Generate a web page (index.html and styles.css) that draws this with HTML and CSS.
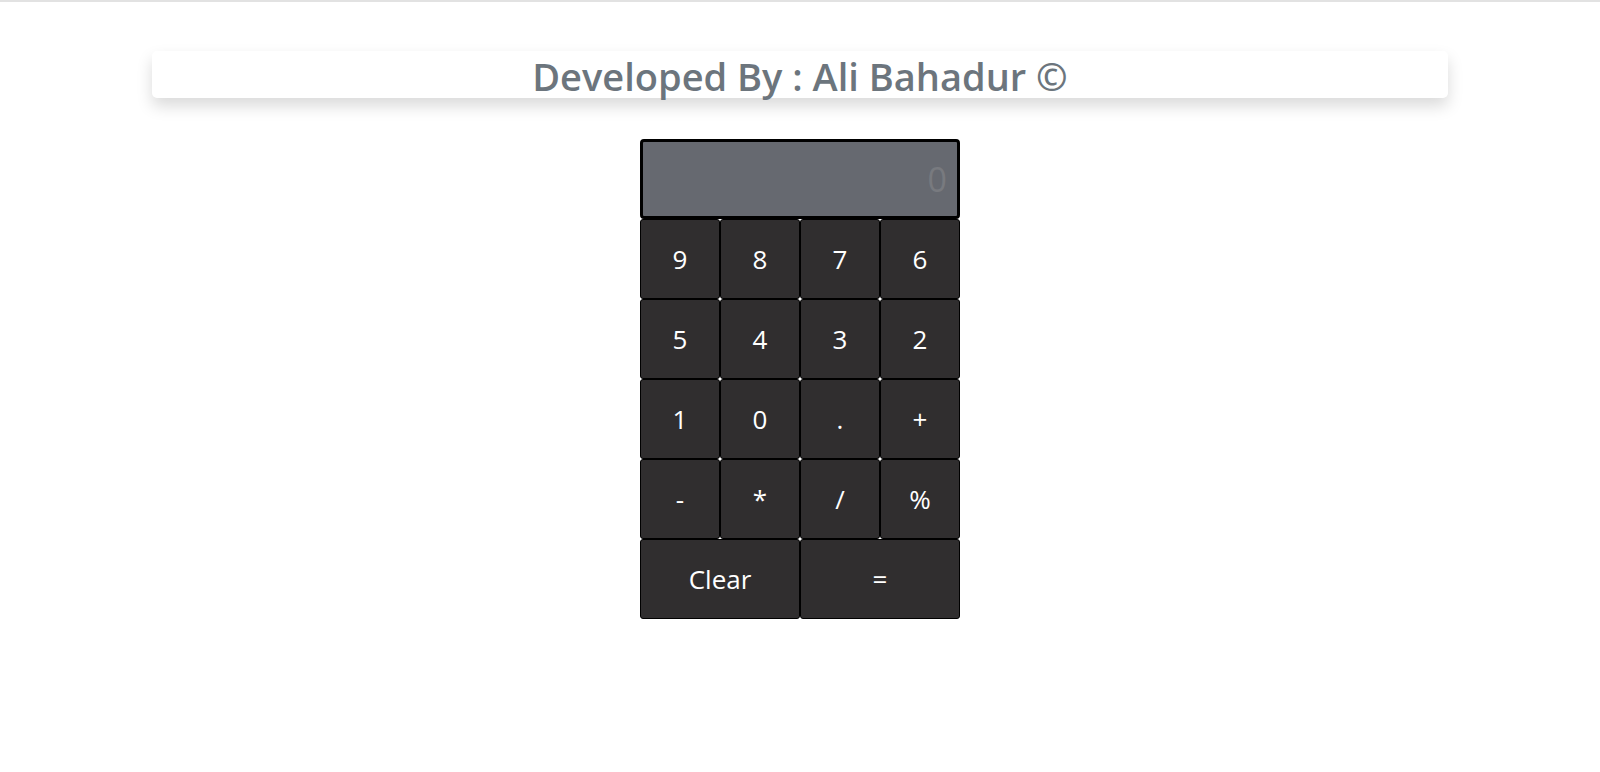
FILE: index.html
```html
<!DOCTYPE html>
<html lang="en">
<head>
<meta charset="utf-8">
<title>Calculator</title>
<link rel="stylesheet" href="styles.css">
</head>
<body>
<div class="topline"></div>
<div class="container">
  <div class="banner">
    <h2 class="title">Developed By : Ali Bahadur ©</h2>
  </div>
  <div class="calc">
    <div class="display">0</div>
    <div class="keys">
      <button class="key">9</button>
      <button class="key">8</button>
      <button class="key">7</button>
      <button class="key">6</button>
      <button class="key">5</button>
      <button class="key">4</button>
      <button class="key">3</button>
      <button class="key">2</button>
      <button class="key">1</button>
      <button class="key">0</button>
      <button class="key">.</button>
      <button class="key">+</button>
      <button class="key">-</button>
      <button class="key">*</button>
      <button class="key">/</button>
      <button class="key">%</button>
      <button class="key wide">Clear</button>
      <button class="key wide">=</button>
    </div>
  </div>
</div>
</body>
</html>
```
FILE: styles.css
```css
* { box-sizing: border-box; }
html, body {
  margin: 0;
  padding: 0;
  background: #fff;
  font-family: "Open Sans", "Noto Sans", sans-serif;
}
.topline {
  height: 2px;
  margin-top: 0;
  background: #e2e2e2;
}
.container {
  width: 1296px;
  margin: 0 auto;
  padding-top: 49px;
}
.banner {
  height: 47px;
  background: #fff;
  border-radius: 5px;
  box-shadow: 0 8px 16px rgba(0, 0, 0, 0.15);
  display: flex;
  align-items: center;
  justify-content: center;
}
.title {
  margin: 0;
  font-size: 38px;
  font-weight: 600;
  line-height: 47px;
  color: #6c757d;
  padding-top: 3px;
}
.calc {
  width: 320px;
  margin: 41px auto 0;
}
.display {
  height: 80px;
  background: #666970;
  border: 3px solid #000;
  border-radius: 4px;
  color: #787a7f;
  font-size: 34px;
  text-align: right;
  padding-right: 10px;
  line-height: 74px;
}
.keys {
  display: grid;
  grid-template-columns: repeat(4, 80px);
  grid-auto-rows: 80px;
}
.key {
  margin: 0;
  background: #302e2f;
  color: #fff;
  border: 1px solid #000;
  border-radius: 3px;
  font-family: "Open Sans", "Noto Sans", sans-serif;
  font-size: 26px;
  padding: 0;
}
.wide { grid-column: span 2; }
```
